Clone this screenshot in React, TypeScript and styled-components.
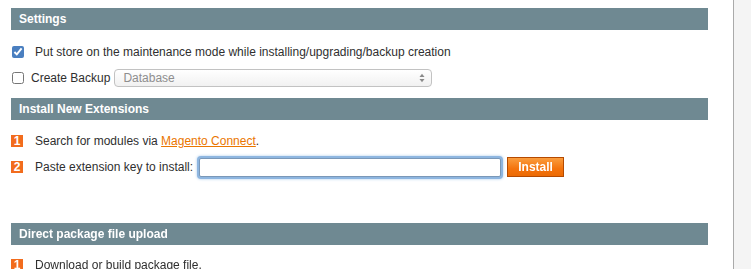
import styled, { createGlobalStyle } from 'styled-components';

const GlobalStyle = createGlobalStyle`
  html, body {
    margin: 0;
    padding: 0;
    background: #f4f4f4;
  }
  body {
    font-family: Arial, "Liberation Sans", Helvetica, sans-serif;
    font-size: 12px;
    color: #2f2f2f;
  }
`;

export default function App(): JSX.Element {
  return (
    <>
      <GlobalStyle />
      <Page>
        <Main>
          <SectionHead>Settings</SectionHead>
          <OptionRow $top={13} $gap={11}>
            <Check checked readOnly />
            <span>Put store on the maintenance mode while installing/upgrading/backup creation</span>
          </OptionRow>
          <OptionRow $top={8} $gap={7}>
            <Check />
            <span>Create Backup</span>
            <FakeSelect>
              <span>Database</span>
              <Arrows>
                <svg width="6" height="10" viewBox="0 0 6 10">
                  <path d="M0.5 4 L3 0.8 L5.5 4 Z" fill="#8a8a8a" />
                  <path d="M0.5 6 L3 9.2 L5.5 6 Z" fill="#8a8a8a" />
                </svg>
              </Arrows>
            </FakeSelect>
          </OptionRow>

          <SectionHead $top={11}>Install New Extensions</SectionHead>
          <StepRow $top={10}>
            <Step>1</Step>
            <span>
              Search for modules via <OrangeLink href="#">Magento Connect</OrangeLink>.
            </span>
          </StepRow>
          <StepRow $top={4}>
            <Step>2</Step>
            <span>Paste extension key to install:</span>
            <KeyInput autoFocus />
            <InstallButton>Install</InstallButton>
          </StepRow>

          <SectionHead $top={45}>Direct package file upload</SectionHead>
          <StepRow $top={9}>
            <Step>1</Step>
            <span>Download or build package file.</span>
          </StepRow>
        </Main>
      </Page>
    </>
  );
}

const Page = styled.div`
  display: flex;
  height: 269px;
  overflow: hidden;
`

const Main = styled.div`
  width: 734px;
  flex: none;
  background: #fff;
  border-right: 1px solid #aaaaaa;
  padding: 8px 25px 0 11px;
  box-sizing: border-box;
`

const SectionHead = styled.div<{ $top?: number }>`
  margin-top: ${p => p.$top ?? 0}px;
  height: 22px;
  line-height: 22px;
  background: #6f8992;
  color: #fff;
  font-weight: bold;
  font-size: 12px;
  padding-left: 8px;
`

const OptionRow = styled.div<{ $top: number; $gap: number }>`
  display: flex;
  align-items: center;
  gap: ${p => p.$gap}px;
  margin-top: ${p => p.$top}px;
  height: 18px;
  padding-left: 1px;
  white-space: nowrap;
`

const Check = styled.input.attrs({ type: 'checkbox' })`
  margin: 0;
  width: 12px;
  height: 12px;
  accent-color: #4a7fc0;
`

const FakeSelect = styled.div`
  width: 318px;
  height: 18px;
  box-sizing: border-box;
  border: 1px solid #c2c2c2;
  border-radius: 4px;
  background: linear-gradient(#ffffff, #f1f1f1);
  display: flex;
  align-items: center;
  justify-content: space-between;
  padding: 0 6px 0 8px;
  color: #8e8e8e;
  font-size: 12px;
  margin-left: -3px;
`

const Arrows = styled.span`
  display: flex;
  align-items: center;
`

const StepRow = styled.div<{ $top: number }>`
  display: flex;
  align-items: center;
  margin-top: ${p => p.$top}px;
  min-height: 22px;
  white-space: nowrap;
`

const Step = styled.span`
  width: 12px;
  height: 12px;
  background: #f26c1d;
  color: #fff;
  font-weight: bold;
  font-size: 12px;
  line-height: 12px;
  text-align: center;
  margin-right: 12px;
  margin-left: 0;
`

const OrangeLink = styled.a`
  color: #ea7601;
  text-decoration: underline;
`

const KeyInput = styled.input`
  width: 302px;
  height: 19px;
  box-sizing: border-box;
  margin: 0 6px 0 6px;
  border: 1px solid #7a98b8;
  border-radius: 2px;
  outline: none;
  box-shadow: 0 0 0 2px #8eb6e0, 0 0 3px 2px #a8c8ea;
  font: inherit;
  padding: 0 4px;
`

const InstallButton = styled.button`
  width: 57px;
  height: 20px;
  border: 1px solid #b54a00;
  background: linear-gradient(#fa9d3e, #f4730c 60%, #ec6a04);
  color: #fff;
  font-family: Arial, "Liberation Sans", sans-serif;
  font-weight: bold;
  font-size: 12px;
  padding: 0;
`
